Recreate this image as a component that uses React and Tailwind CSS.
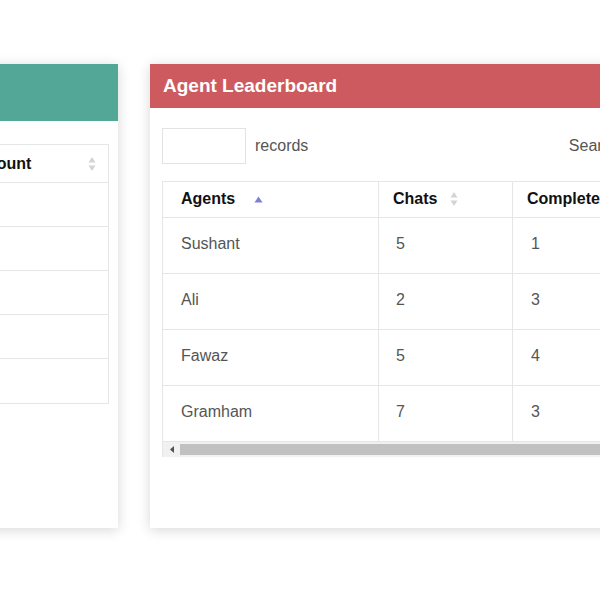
const agents = [
  { name: 'Sushant', chats: 5, completed: 1 },
  { name: 'Ali', chats: 2, completed: 3 },
  { name: 'Fawaz', chats: 5, completed: 4 },
  { name: 'Gramham', chats: 7, completed: 3 },
];

const SortBoth = () => (
  <svg width="8" height="16" viewBox="0 0 8 16" className="shrink-0">
    <path d="M4 1 L7.5 6.5 H0.5 Z" fill="#d4d4d4" />
    <path d="M4 15 L7.5 9.5 H0.5 Z" fill="#d4d4d4" />
  </svg>
);

const SortUp = () => (
  <svg width="9" height="7" viewBox="0 0 9 7" className="shrink-0">
    <path d="M4.5 0.5 L8.5 6.5 H0.5 Z" fill="#7c7ed8" />
  </svg>
);

const App = () => {
  return (
    <div
      className="w-[600px] h-[600px] overflow-hidden bg-white flex items-start gap-[32px] pt-[64px]"
      style={{ fontFamily: '"Liberation Sans", Arial, sans-serif' }}
    >
      {/* Левая карточка */}
      <div className="ml-[-182px] w-[300px] h-[464px] shrink-0 bg-white shadow-[0_2px_12px_rgba(0,0,0,0.16)]">
        <div className="h-[57px] bg-[#52a797]" />
        <div className="pt-[23px] pr-[9px] pl-[12px]">
          <div className="border border-[#e6e6e6]">
            <div className="h-[38px] flex items-center justify-between pl-[140px] pr-[12px] border-b border-[#e6e6e6]">
              <span className="text-[16px] font-bold text-[#111]">Amount</span>
              <SortBoth />
            </div>
            {[0, 1, 2, 3, 4].map((i) => (
              <div
                key={i}
                className={`h-[44px] ${i < 4 ? 'border-b border-[#e6e6e6]' : ''}`}
              />
            ))}
          </div>
        </div>
      </div>

      {/* Правая карточка */}
      <div className="w-[520px] h-[464px] shrink-0 bg-white shadow-[0_2px_12px_rgba(0,0,0,0.16)]">
        <div className="h-[44px] bg-[#cd5a5f] flex items-center pl-[13px]">
          <h2 className="text-[19px] font-bold text-white">Agent Leaderboard</h2>
        </div>

        <div className="px-[12px] pt-[20px]">
          <div className="flex items-center">
            <div className="w-[84px] h-[36px] border border-[#e3e3e3]" />
            <span className="ml-[9px] text-[16px] text-[#555]">records</span>
            <span className="ml-auto mr-[34px] text-[16px] text-[#555]">Search:</span>
          </div>

          <div className="mt-[17px] w-[520px] border border-[#e6e6e6] border-b-0">
            {/* Заголовок таблицы */}
            <div className="flex h-[36px] border-b border-[#e6e6e6] text-[16px] font-bold text-[#111]">
              <div className="w-[216px] flex items-center pl-[18px] pb-[1px] gap-[19px] border-r border-[#e6e6e6]">
                <span>Agents</span>
                <SortUp />
              </div>
              <div className="w-[134px] flex items-center pl-[14px] pb-[1px] gap-[13px] border-r border-[#e6e6e6]">
                <span>Chats</span>
                <SortBoth />
              </div>
              <div className="flex-1 flex items-center pl-[14px] pb-[1px]">
                <span>Completed</span>
              </div>
            </div>

            {agents.map((a) => (
              <div
                key={a.name}
                className="flex h-[56px] border-b border-[#e6e6e6] text-[16px] text-[#555]"
              >
                <div className="w-[216px] flex items-center pl-[18px] pb-[3px] border-r border-[#e6e6e6]">
                  {a.name}
                </div>
                <div className="w-[134px] flex items-center pl-[17px] pb-[3px] border-r border-[#e6e6e6]">
                  {a.chats}
                </div>
                <div className="flex-1 flex items-center pl-[18px] pb-[3px]">{a.completed}</div>
              </div>
            ))}

            {/* Полоса прокрутки */}
            <div className="h-[15px] flex items-center bg-[#f1f1f1]">
              <div className="w-[17px] h-full flex items-center justify-center">
                <svg width="4" height="7" viewBox="0 0 4 7">
                  <path d="M0 3.5 L4 0 V7 Z" fill="#505050" />
                </svg>
              </div>
              <div className="flex-1 h-[11px] bg-[#c1c1c1]" />
            </div>
          </div>
        </div>
      </div>
    </div>
  );
};

export default App;
